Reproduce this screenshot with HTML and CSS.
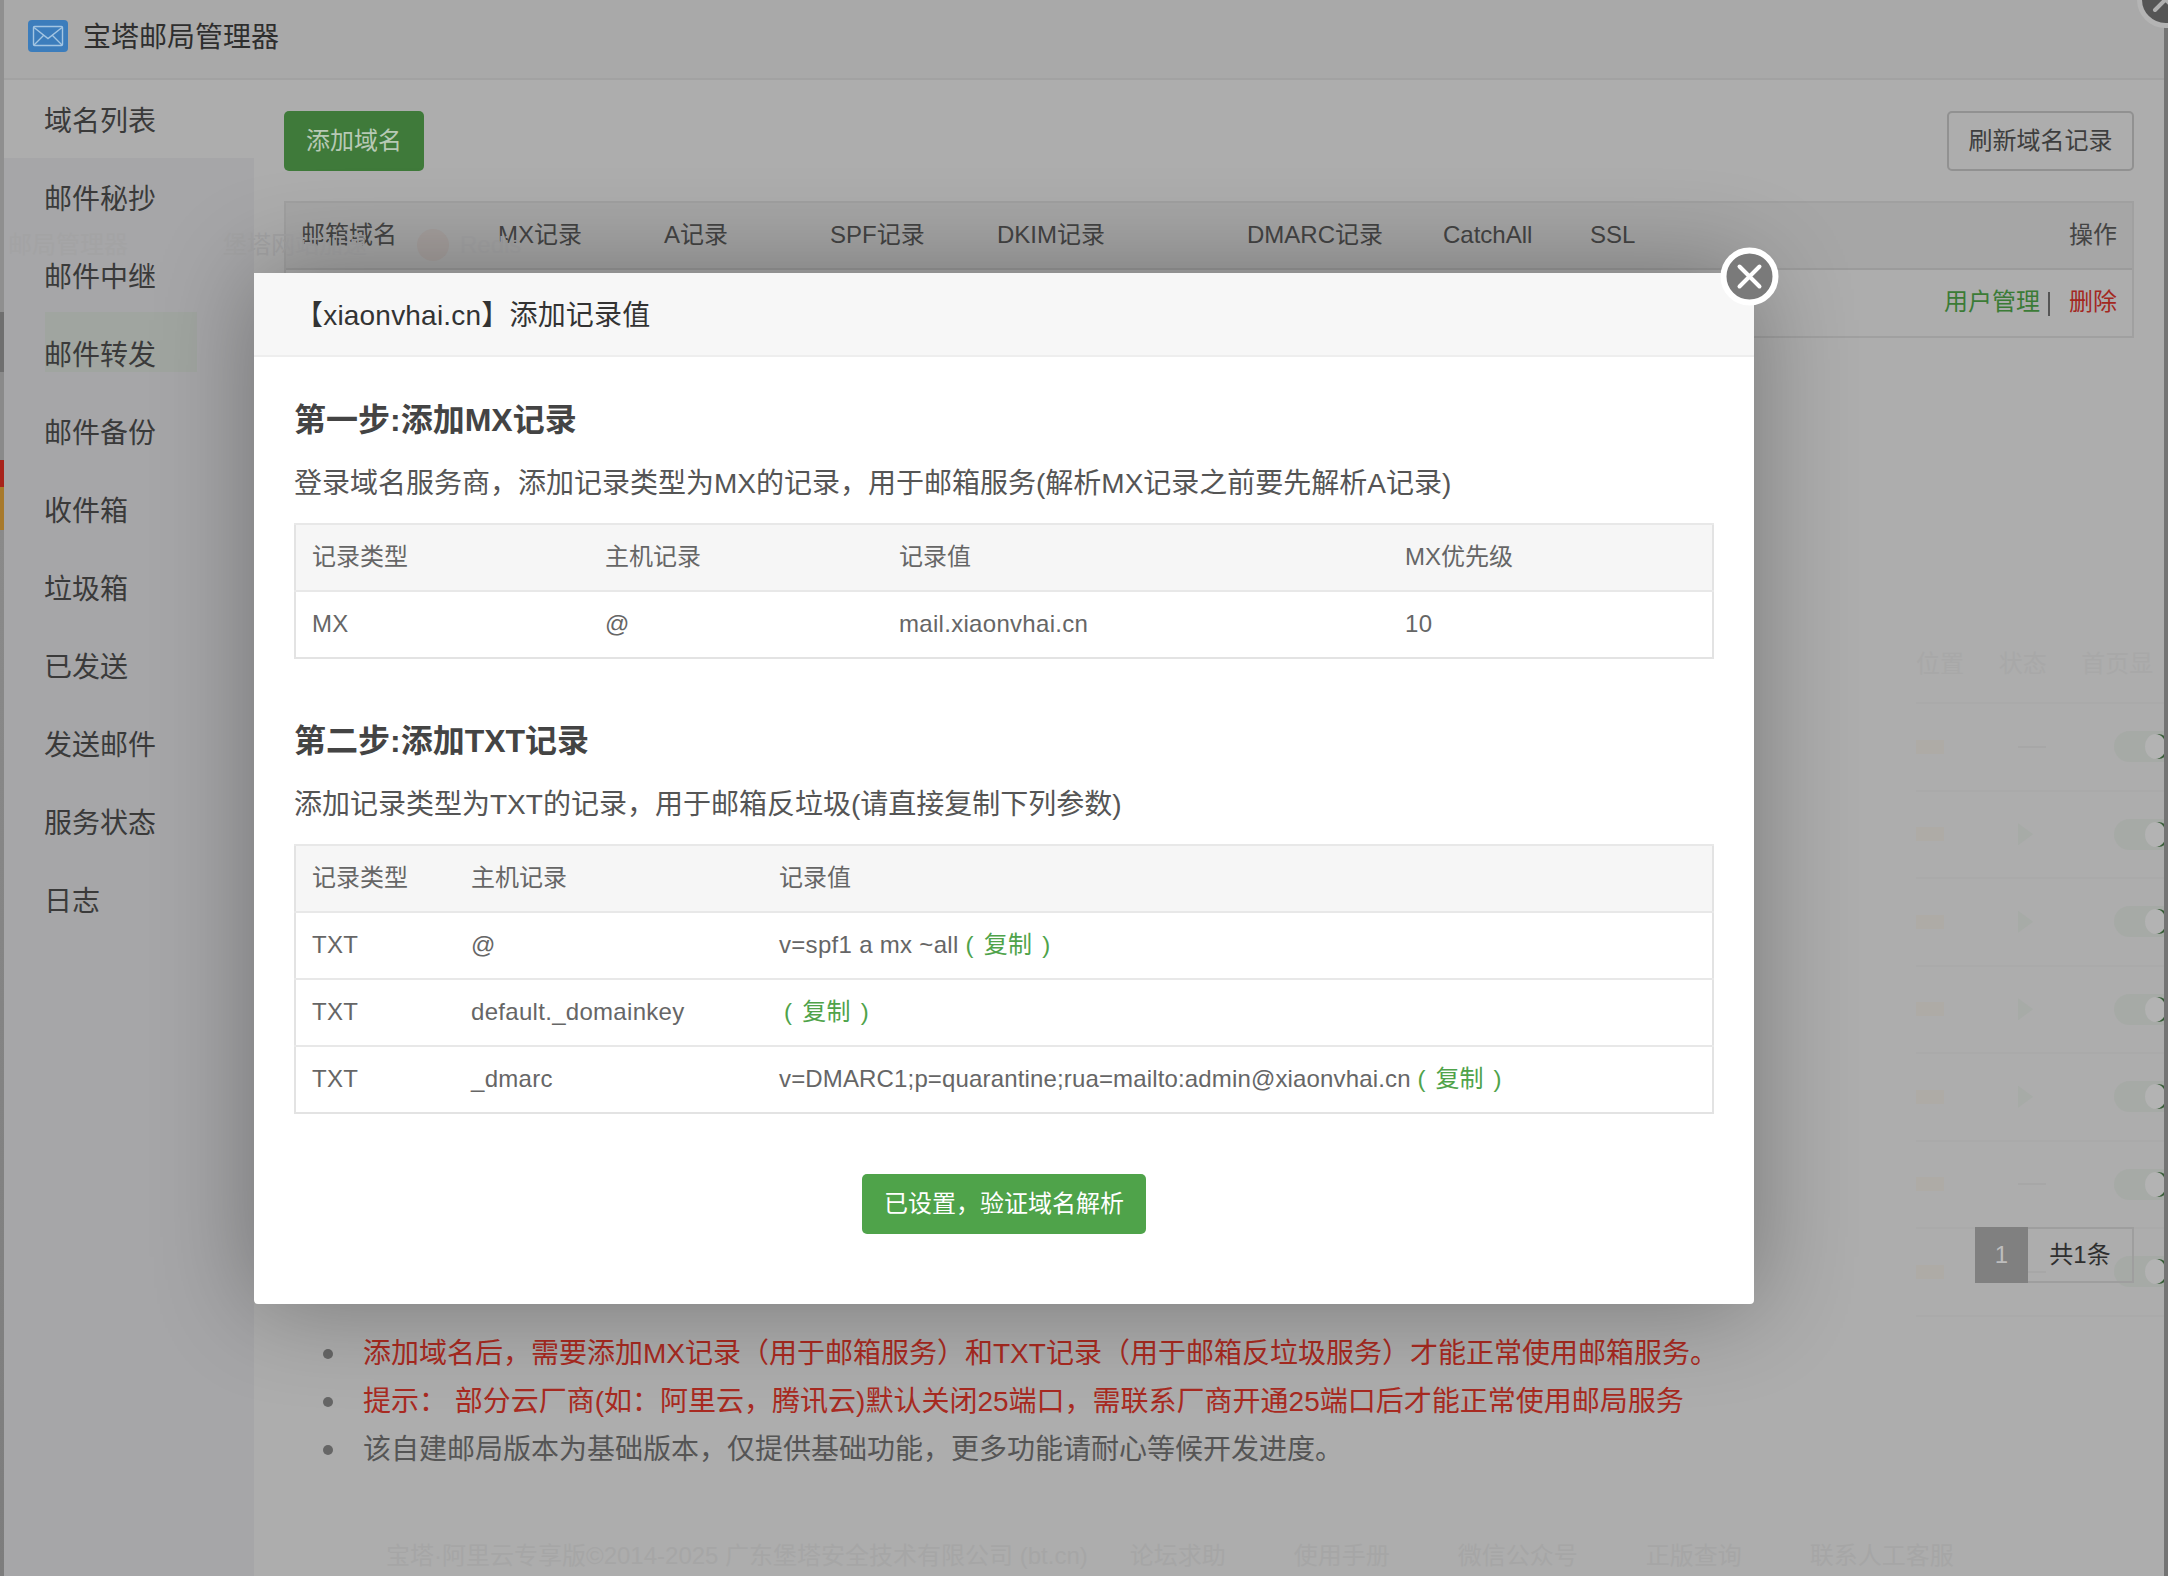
FILE: index.html
```html
<!DOCTYPE html>
<html lang="zh-CN">
<head>
<meta charset="utf-8">
<title>宝塔邮局管理器</title>
<link rel="stylesheet" href="styles.css">
</head>
<body>
<div class="edge edge-left"></div>
<div class="edge edge-right"></div>

<div class="ghost-top">
  <span class="g-a">邮局管理器</span>
  <span class="g-b">堡塔网站加速</span>
  <span class="g-c"></span>
  <span class="g-d">Redis</span>
</div>

<div class="app">
  <header class="topbar">
    <svg class="logo" viewBox="0 0 40 32" aria-hidden="true">
      <rect width="40" height="32" rx="4" class="logo-bg"/>
      <g class="logo-line">
        <rect x="5.5" y="6.5" width="29" height="19" rx="1"/>
        <path d="M6 7.5 L20 18.5 L34 7.5"/>
        <path d="M6 25 L16 15 M34 25 L24 15"/>
      </g>
    </svg>
    <span class="brand">宝塔邮局管理器</span>
  </header>

  <div class="layout">
    <aside class="sidebar">
      <div class="nav-item active">域名列表</div>
      <div class="nav-item">邮件秘抄</div>
      <div class="nav-item">邮件中继</div>
      <div class="nav-item">邮件转发</div>
      <div class="nav-item">邮件备份</div>
      <div class="nav-item">收件箱</div>
      <div class="nav-item">垃圾箱</div>
      <div class="nav-item">已发送</div>
      <div class="nav-item">发送邮件</div>
      <div class="nav-item">服务状态</div>
      <div class="nav-item">日志</div>
      <div class="ghost-green"></div>
    </aside>

    <main class="main">
      <div class="toolbar">
        <div class="btn btn-add">添加域名</div>
        <div class="btn btn-refresh">刷新域名记录</div>
      </div>

      <div class="grid-table">
        <div class="grid-row grid-head">
          <span class="c1">邮箱域名</span>
          <span class="c2">MX记录</span>
          <span class="c3">A记录</span>
          <span class="c4">SPF记录</span>
          <span class="c5">DKIM记录</span>
          <span class="c6">DMARC记录</span>
          <span class="c7">CatchAll</span>
          <span class="c8">SSL</span>
          <span class="c9">操作</span>
        </div>
        <div class="grid-row grid-body">
          <span class="c9"><span class="link-green">用户管理</span><span class="sep"></span><span class="link-red">删除</span></span>
        </div>
      </div>

      <div class="ghost-rows">
        <div class="ghost-row ghost-heading"><span>位置</span><span>状态</span><span>首页显</span></div>
        <div class="ghost-row"><i class="bar"></i><i class="dash"></i><i class="pill"></i></div>
        <div class="ghost-row"><i class="bar"></i><i class="tri"></i><i class="pill"></i></div>
        <div class="ghost-row"><i class="bar"></i><i class="tri"></i><i class="pill"></i></div>
        <div class="ghost-row"><i class="bar"></i><i class="tri"></i><i class="pill"></i></div>
        <div class="ghost-row"><i class="bar"></i><i class="tri"></i><i class="pill"></i></div>
        <div class="ghost-row"><i class="bar"></i><i class="dash"></i><i class="pill"></i></div>
        <div class="ghost-row"><i class="bar"></i><i class="dash"></i><i class="pill"></i></div>
      </div>

      <div class="pager">
        <span class="page-cur">1</span>
        <span class="page-total">共1条</span>
      </div>

      <ul class="notes">
        <li class="warn">添加域名后，需要添加MX记录（用于邮箱服务）和TXT记录（用于邮箱反垃圾服务）才能正常使用邮箱服务。</li>
        <li class="warn">提示： 部分云厂商(如：阿里云，腾讯云)默认关闭25端口，需联系厂商开通25端口后才能正常使用邮局服务</li>
        <li>该自建邮局版本为基础版本，仅提供基础功能，更多功能请耐心等候开发进度。</li>
      </ul>

      <footer class="ghost-footer">
        <span class="f-main">宝塔·阿里云专享版©2014-2025 广东堡塔安全技术有限公司 (bt.cn)</span>
        <span>论坛求助</span><span>使用手册</span><span>微信公众号</span><span>正版查询</span><span>联系人工客服</span>
      </footer>
    </main>
  </div>
</div>

<svg class="outer-close" viewBox="0 0 59 59" aria-hidden="true">
  <circle cx="29.5" cy="29.5" r="26" class="oc-disc"/>
  <path d="M19 19 L40 40 M40 19 L19 40" class="oc-x"/>
</svg>

<section class="modal">
  <svg class="modal-close" viewBox="0 0 59 59" aria-hidden="true">
    <circle cx="29.5" cy="29.5" r="26" class="mc-disc"/>
    <path d="M19.5 19.5 L39.5 39.5 M39.5 19.5 L19.5 39.5" class="mc-x"/>
  </svg>
  <div class="modal-title">【xiaonvhai.cn】添加记录值</div>
  <div class="modal-body">
    <h2 class="step-title">第一步:添加MX记录</h2>
    <p class="step-desc">登录域名服务商，添加记录类型为MX的记录，用于邮箱服务(解析MX记录之前要先解析A记录)</p>
    <table class="dns">
      <thead>
        <tr><th class="w294">记录类型</th><th class="w294">主机记录</th><th class="w506">记录值</th><th>MX优先级</th></tr>
      </thead>
      <tbody>
        <tr><td>MX</td><td>@</td><td>mail.xiaonvhai.cn</td><td>10</td></tr>
      </tbody>
    </table>

    <h2 class="step-title second">第二步:添加TXT记录</h2>
    <p class="step-desc">添加记录类型为TXT的记录，用于邮箱反垃圾(请直接复制下列参数)</p>
    <table class="dns">
      <thead>
        <tr><th class="w160">记录类型</th><th class="w308">主机记录</th><th>记录值</th></tr>
      </thead>
      <tbody>
        <tr><td>TXT</td><td>@</td><td>v=spf1 a mx ~all <span class="copy">( 复制 )</span></td></tr>
        <tr><td>TXT</td><td>default._domainkey</td><td><span class="copy lead">( 复制 )</span></td></tr>
        <tr><td>TXT</td><td>_dmarc</td><td class="tight">v=DMARC1;p=quarantine;rua=mailto:admin@xiaonvhai.cn <span class="copy">( 复制 )</span></td></tr>
      </tbody>
    </table>

    <div class="verify">已设置，验证域名解析</div>
  </div>
</section>
</body>
</html>
```

FILE: styles.css
```css
* { box-sizing: border-box; }
html, body { margin: 0; padding: 0; }
body {
  position: relative;
  width: 2168px;
  height: 1576px;
  overflow: hidden;
  background: #adadad;
  font-family: "Liberation Sans", "Noto Sans CJK SC", sans-serif;
  font-size: 24px;
  line-height: 34px;
  color: #444;
}

/* slivers of the page behind the outer window */
.edge { position: absolute; top: 0; bottom: 0; width: 4px; z-index: 3; }
.edge-left {
  left: 0;
  background: linear-gradient(#8f8f8f 0, #8f8f8f 312px, #6f6f6f 312px, #6f6f6f 372px, #8a8a8a 372px, #8a8a8a 460px, #a8231b 460px, #a8231b 487px, #a87a2c 487px, #a87a2c 530px, #8a8a8a 530px, #7d7d7d 100%);
}
.edge-right { right: 0; background: #747474; }

.app { margin: 0 4px; height: 1576px; display: flex; flex-direction: column; }

/* header */
.topbar {
  height: 80px;
  flex: none;
  display: flex;
  align-items: center;
  gap: 15px;
  padding: 0 0 3px 24px;
  background: #a9a9a9;
  border-bottom: 2px solid #a2a2a2;
}
.logo { width: 40px; height: 32px; flex: none; margin-bottom: 3px; }
.logo-bg { fill: #3c7dbc; }
.logo-line { fill: none; stroke: #a3c5e2; stroke-width: 1.4; }
.brand { font-size: 28px; line-height: 40px; color: #2e2e2e; }

/* sidebar */
.layout { flex: 1; display: flex; min-height: 0; }
.sidebar {
  position: relative;
  width: 250px;
  flex: none;
  background: #a6a6a8;
}
.nav-item {
  position: relative;
  z-index: 1;
  height: 78.1px;
  display: flex;
  align-items: center;
  padding: 5px 0 0 40px;
  font-size: 28px;
  color: #3a3a3a;
}
.nav-item.active { background: #adadad; }
.ghost-green {
  position: absolute;
  left: 41px;
  top: 232px;
  width: 152px;
  height: 60px;
  background: #a0a5a0;
}

/* main */
.main { position: relative; flex: 1; min-width: 0; padding: 31px 30px 0; background: #adadad; }
.toolbar { display: flex; justify-content: space-between; }
.btn {
  height: 60px;
  display: flex;
  align-items: center;
  justify-content: center;
  border-radius: 5px;
  font-size: 24px;
}
.btn-add { width: 140px; background: #3f7a3a; color: #b7c9b5; }
.btn-refresh { width: 187px; border: 2px solid #919191; color: #3e3e3e; }

.grid-table { margin-top: 30px; border: 2px solid #a0a0a0; }
.grid-row { height: 67px; display: flex; align-items: center; position: relative; padding-bottom: 2px; }
.grid-head { background: #a6a6a6; border-bottom: 2px solid #9b9b9b; color: #444; }
.grid-body { height: 66px; }
.grid-row > span { flex: none; }
.c1 { width: 212px; padding-left: 15px; }
.c2 { width: 166px; }
.c3 { width: 166px; }
.c4 { width: 167px; }
.c5 { width: 250px; }
.c6 { width: 196px; }
.c7 { width: 147px; }
.c8 { width: 60px; }
.grid-row > .c9 { margin-left: auto; padding-right: 15px; display: flex; align-items: center; }
.link-green { color: #3b7b36; }
.link-red { color: #a3281f; }
.sep { width: 2px; height: 24px; background: #555; margin: 3px 19px 0 8px; }

/* faint rows of the page behind, showing through the overlay */
.ghost-rows {
  position: absolute;
  left: 1662px;
  top: 545px;
  width: 248px;
  overflow: hidden;
  color: #a8a8a8;
}
.ghost-row { height: 87.5px; display: flex; align-items: center; border-bottom: 2px solid #aaa; }
.ghost-heading { height: 79px; }
.ghost-heading span { width: 98px; white-space: nowrap; }
.bar { width: 28px; height: 14px; background: #aeaba6; margin-right: 74px; flex: none; }
.dash { width: 28px; height: 2px; background: #a7a7a7; margin-right: 68px; flex: none; }
.tri {
  width: 15px;
  height: 22px;
  margin-right: 81px;
  flex: none;
  background: #a7aba7;
  clip-path: polygon(0 0, 100% 50%, 0 100%);
}
.pill { position: relative; width: 64px; height: 31px; border-radius: 16px; background: #a6aaa6; flex: none; }
.pill::after {
  content: "";
  position: absolute;
  left: 31px;
  top: 3px;
  width: 21px;
  height: 25px;
  border-radius: 50%;
  background: #b3b3b3;
  box-shadow: 3px 0 0 #3a5f3a;
}

/* pager */
.pager { display: flex; justify-content: flex-end; margin-top: 889px; height: 56px; position: relative; }
.page-cur {
  width: 53px;
  display: flex;
  align-items: center;
  justify-content: center;
  background: #808080;
  color: #bdbdbd;
}
.page-total {
  width: 106px;
  display: flex;
  align-items: center;
  justify-content: center;
  padding-bottom: 1px;
  border: 2px solid #9e9e9e;
  border-left: 0;
  color: #2f2f2f;
}

/* notes */
.notes {
  margin: 47px 0 0;
  padding: 0 0 0 79px;
  list-style: none;
  font-size: 28px;
  line-height: 48px;
  color: #555;
  white-space: nowrap;
}
.notes li { position: relative; }
.notes li::before {
  content: "";
  position: absolute;
  left: -40px;
  top: 19px;
  width: 10px;
  height: 10px;
  border-radius: 50%;
  background: #666;
}
.notes .warn { color: #a82a21; }

.ghost-footer {
  margin-top: 58px;
  padding-left: 102px;
  display: flex;
  gap: 68px;
  color: #a6a6a6;
  white-space: nowrap;
  line-height: 48px;
}
.f-main { margin-right: -26px; }

/* outer close button */
.outer-close { position: absolute; right: -27px; top: -30px; width: 59px; height: 59px; z-index: 4; }
.oc-disc { fill: #555; stroke: #b4b4b4; stroke-width: 5; }
.oc-x { fill: none; stroke: #b0b0b0; stroke-width: 4; stroke-linecap: round; }

/* modal */
.modal {
  position: absolute;
  left: 254px;
  top: 273px;
  width: 1500px;
  height: 1031px;
  z-index: 5;
  background: #fff;
  border-radius: 0 0 4px 4px;
  box-shadow: 0 0 100px rgba(0, 0, 0, .32);
  color: #555;
}
.modal-close { position: absolute; right: -25px; top: -26px; width: 59px; height: 59px; }
.mc-disc { fill: #7a7a7a; stroke: #fff; stroke-width: 6; }
.mc-x { fill: none; stroke: #fff; stroke-width: 4; stroke-linecap: round; }
.modal-title {
  height: 84px;
  display: flex;
  align-items: center;
  padding: 3px 0 0 41px;
  background: #f7f7f7;
  border-bottom: 2px solid #eee;
  font-size: 28px;
  letter-spacing: .2px;
  color: #333;
}
.modal-body { padding: 40px 40px 0 40px; }
.step-title { margin: 0; font-size: 32px; line-height: 46px; font-weight: 700; color: #444; }
.step-title.second { margin-top: 59px; }
.step-desc { margin: 21px 0 19px; font-size: 28px; line-height: 40px; color: #555; white-space: nowrap; }

.dns {
  width: 1420px;
  table-layout: fixed;
  border-collapse: collapse;
  border: 2px solid #e3e3e3;
  font-size: 24px;
  color: #666;
}
.dns th, .dns td {
  height: 67px;
  padding: 0 16px 2px;
  text-align: left;
  font-weight: 400;
  white-space: nowrap;
  border-top: 2px solid #e8e8e8;
}
.dns td { letter-spacing: .3px; }
.dns td.tight { letter-spacing: .15px; }
.dns th { background: #f6f6f6; }
.w294 { width: 294px; }
.w506 { width: 506px; }
.w160 { width: 160px; }
.w308 { width: 308px; }
.copy { color: #4fa34a; word-spacing: 3px; }
.copy.lead { margin-left: 5px; }

.verify {
  width: 284px;
  height: 60px;
  margin: 60px auto 0;
  display: flex;
  align-items: center;
  justify-content: center;
  border-radius: 5px;
  background: #4fa34a;
  color: #fff;
  font-size: 24px;
}

/* faint strip over the sidebar */
.ghost-top { position: absolute; left: 0; top: 225px; height: 40px; width: 760px; z-index: 2; color: #a3a3a4; font-size: 24px; line-height: 40px; }
.ghost-top span { position: absolute; top: 0; white-space: nowrap; }
.g-a { left: 8px; }
.g-b { left: 223px; }
.g-c { left: 417px; top: 4px !important; width: 32px; height: 32px; border-radius: 50%; background: #a59f9d; }
.g-d { left: 460px; }
```
